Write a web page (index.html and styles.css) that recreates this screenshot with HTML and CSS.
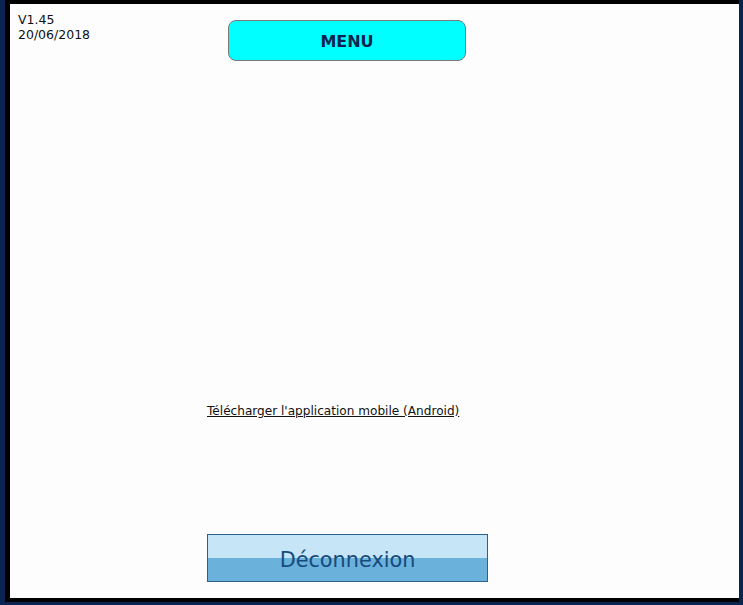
FILE: index.html
```html
<!DOCTYPE html>
<html lang="fr">
<head>
<meta charset="utf-8">
<title>Menu</title>
<link rel="stylesheet" href="styles.css">
</head>
<body>
<div class="frame">
  <div class="header">
    <div class="version">V1.45<br>20/06/2018</div>
    <button class="menu" type="button">MENU</button>
  </div>
  <div class="content">
    <a class="mobile-link" href="#">Télécharger l'application mobile (Android)</a>
    <button class="logout" type="button">Déconnexion</button>
  </div>
</div>
</body>
</html>
```

FILE: styles.css
```css
html, body {
  margin: 0;
  padding: 0;
}
body {
  background: #0b2350;
  width: 743px;
  height: 605px;
  overflow: hidden;
  font-family: "DejaVu Sans", Verdana, sans-serif;
}
.frame {
  box-sizing: border-box;
  margin-left: 5px;
  width: 734px;
  height: 602px;
  background: #fdfdfd;
  border-left: 5px solid #000;
  border-top: 4px solid #000;
  border-bottom: 4px solid #000;
  padding: 7px 0 0 8px;
  display: flex;
  flex-direction: column;
}
.header {
  display: flex;
  align-items: flex-start;
}
.version {
  width: 210px;
  font-size: 12.5px;
  line-height: 15px;
  color: #111;
  padding-top: 1px;
}
.menu {
  margin-top: 9px;
  box-sizing: border-box;
  width: 238px;
  height: 41px;
  background: #00ffff;
  border: 1px solid #7a7a7a;
  border-radius: 8px;
  font-family: "DejaVu Sans", Verdana, sans-serif;
  font-weight: bold;
  font-size: 16px;
  color: #0b2350;
  padding: 2px 0 0;
}
.content {
  display: flex;
  flex-direction: column;
  align-items: flex-start;
  padding-left: 189px;
}
.mobile-link {
  margin-top: 343px;
  font-size: 12.1px;
  line-height: 14px;
  color: #111;
  text-decoration: underline;
}
.logout {
  margin-top: 116px;
  box-sizing: border-box;
  width: 281px;
  height: 48px;
  border: 1px solid #2a6190;
  background: linear-gradient(to bottom, #c6e5f6 0, #c6e5f6 50%, #6ab1dc 50%, #6ab1dc 100%);
  font-family: "DejaVu Sans", Verdana, sans-serif;
  font-size: 20.8px;
  color: #164a7c;
  padding: 3px 0 0;
}
```
